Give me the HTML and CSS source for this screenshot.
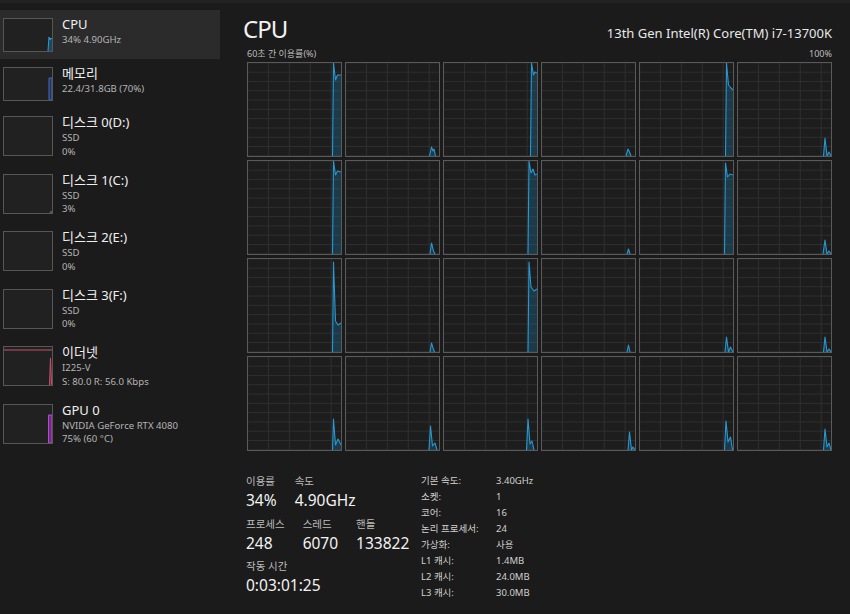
FILE: index.html
```html
<!DOCTYPE html>
<html lang="ko">
<head>
<meta charset="utf-8">
<title>작업 관리자 - CPU</title>
<link rel="stylesheet" href="styles.css">
</head>
<body>
<div class="topbar"></div>
<div class="app">
  <nav class="sidebar">
    <div class="item sel">
      <div class="thumb"><svg viewBox="0 0 48 32"><path class="a-cpu" d="M44 32 L45 18 L46 21 L47 19 L48 20 L48 32Z"/><polyline class="l-cpu" points="44,32 45,18 46,21 47,19 48,20"/></svg></div>
      <div class="info"><div class="name">CPU</div><div class="sub">34% 4.90GHz</div></div>
    </div>
    <div class="item">
      <div class="thumb"><svg viewBox="0 0 48 32"><path class="a-mem" d="M45 32 L45 10 L48 10 L48 32Z"/></svg></div>
      <div class="info"><div class="name">메모리</div><div class="sub">22.4/31.8GB (70%)</div></div>
    </div>
    <div class="item tall">
      <div class="thumb"></div>
      <div class="info"><div class="name">디스크 0(D:)</div><div class="sub">SSD</div><div class="sub">0%</div></div>
    </div>
    <div class="item tall">
      <div class="thumb"><svg viewBox="0 0 48 38"><polyline class="l-disk" points="46,38 47,36 48,38"/></svg></div>
      <div class="info"><div class="name">디스크 1(C:)</div><div class="sub">SSD</div><div class="sub">3%</div></div>
    </div>
    <div class="item tall">
      <div class="thumb"></div>
      <div class="info"><div class="name">디스크 2(E:)</div><div class="sub">SSD</div><div class="sub">0%</div></div>
    </div>
    <div class="item tall">
      <div class="thumb"></div>
      <div class="info"><div class="name">디스크 3(F:)</div><div class="sub">SSD</div><div class="sub">0%</div></div>
    </div>
    <div class="item tall">
      <div class="thumb"><svg viewBox="0 0 48 38"><polyline class="l-net" points="0,3 48,3"/><path class="a-net" d="M45.5 38 L46.5 11 L47.5 36 L48 38Z"/><polyline class="l-net" points="45.5,38 46.5,11 47.5,36 48,38"/></svg></div>
      <div class="info"><div class="name">이더넷</div><div class="sub">I225-V</div><div class="sub">S: 80.0 R: 56.0 Kbps</div></div>
    </div>
    <div class="item tall">
      <div class="thumb"><svg viewBox="0 0 48 38"><path class="a-gpu" d="M44.5 38 L44.5 10 L48 10 L48 38Z"/></svg></div>
      <div class="info"><div class="name">GPU 0</div><div class="sub">NVIDIA GeForce RTX 4080</div><div class="sub">75% (60 °C)</div></div>
    </div>
  </nav>

  <main class="main">
    <div class="header">
      <div class="title">CPU</div>
      <div class="model">13th Gen Intel(R) Core(TM) i7-13700K</div>
    </div>
    <div class="caption"><span>60초 간 이용률(%)</span><span>100%</span></div>
    <div class="grid">
      <!-- row 1 -->
      <div class="cell"><svg viewBox="0 0 93 93"><path class="area" d="M84.5 93 L85.5 0 L87.5 17 L89.5 12 L93 12 L93 93Z"/><polyline class="line" points="84.5,93 85.5,0 87.5,17 89.5,12 93,12"/></svg></div>
      <div class="cell"><svg viewBox="0 0 93 93"><path class="area" d="M83.5 93 L85.5 84 L87 88 L88 86 L89.5 93Z"/><polyline class="line" points="83.5,93 85.5,84 87,88 88,86 89.5,93"/></svg></div>
      <div class="cell"><svg viewBox="0 0 93 93"><path class="area" d="M86.5 93 L87.5 0 L89.5 12 L91 9 L93 10 L93 93Z"/><polyline class="line" points="86.5,93 87.5,0 89.5,12 91,9 93,10"/></svg></div>
      <div class="cell"><svg viewBox="0 0 93 93"><path class="area" d="M84 93 L86 86 L87.5 89 L89 93Z"/><polyline class="line" points="84,93 86,86 87.5,89 89,93"/></svg></div>
      <div class="cell"><svg viewBox="0 0 93 93"><path class="area" d="M85.5 93 L86.5 0 L88.5 22 L91 25 L93 27 L93 93Z"/><polyline class="line" points="85.5,93 86.5,0 88.5,22 91,25 93,27"/></svg></div>
      <div class="cell"><svg viewBox="0 0 93 93"><path class="area" d="M85.5 93 L87 75 L89 93 L91 89 L93 93Z"/><polyline class="line" points="85.5,93 87,75 89,93 91,89 93,93"/></svg></div>
      <!-- row 2 -->
      <div class="cell"><svg viewBox="0 0 93 93"><path class="area" d="M84.5 93 L85.5 0 L87.5 14 L89.5 10 L93 11 L93 93Z"/><polyline class="line" points="84.5,93 85.5,0 87.5,14 89.5,10 93,11"/></svg></div>
      <div class="cell"><svg viewBox="0 0 93 93"><path class="area" d="M84 93 L85.5 82 L87.5 90 L89 93Z"/><polyline class="line" points="84,93 85.5,82 87.5,90 89,93"/></svg></div>
      <div class="cell"><svg viewBox="0 0 93 93"><path class="area" d="M84 93 L85 0 L87 12 L89 8 L91 14 L93 13 L93 93Z"/><polyline class="line" points="84,93 85,0 87,12 89,8 91,14 93,13"/></svg></div>
      <div class="cell"><svg viewBox="0 0 93 93"><path class="area" d="M85 93 L86.5 88 L88 93Z"/><polyline class="line" points="85,93 86.5,88 88,93"/></svg></div>
      <div class="cell"><svg viewBox="0 0 93 93"><path class="area" d="M84.5 93 L85.5 2 L87.5 16 L90 13 L93 14 L93 93Z"/><polyline class="line" points="84.5,93 85.5,2 87.5,16 90,13 93,14"/></svg></div>
      <div class="cell"><svg viewBox="0 0 93 93"><path class="area" d="M85 93 L87 79 L89 93 L91 90 L93 93Z"/><polyline class="line" points="85,93 87,79 89,93 91,90 93,93"/></svg></div>
      <!-- row 3 -->
      <div class="cell"><svg viewBox="0 0 93 93"><path class="area" d="M84.5 93 L85.5 3 L87.5 62 L90 66 L93 64 L93 93Z"/><polyline class="line" points="84.5,93 85.5,3 87.5,62 90,66 93,64"/></svg></div>
      <div class="cell"><svg viewBox="0 0 93 93"><path class="area" d="M84 93 L85.5 84 L87 89 L88.5 93Z"/><polyline class="line" points="84,93 85.5,84 87,89 88.5,93"/></svg></div>
      <div class="cell"><svg viewBox="0 0 93 93"><path class="area" d="M84 93 L85 3 L87 28 L90 32 L93 30 L93 93Z"/><polyline class="line" points="84,93 85,3 87,28 90,32 93,30"/></svg></div>
      <div class="cell"><svg viewBox="0 0 93 93"><path class="area" d="M85 93 L86.5 86 L88 93Z"/><polyline class="line" points="85,93 86.5,86 88,93"/></svg></div>
      <div class="cell"><svg viewBox="0 0 93 93"><path class="area" d="M85 93 L86.5 78 L88.5 93 L90.5 88 L93 93Z"/><polyline class="line" points="85,93 86.5,78 88.5,93 90.5,88 93,93"/></svg></div>
      <div class="cell"><svg viewBox="0 0 93 93"><path class="area" d="M85.5 93 L87 78 L89 93 L91 90 L93 93Z"/><polyline class="line" points="85.5,93 87,78 89,93 91,90 93,93"/></svg></div>
      <!-- row 4 -->
      <div class="cell"><svg viewBox="0 0 93 93"><path class="area" d="M84.5 93 L85.5 62 L87.5 88 L90 82 L93 88 L93 93Z"/><polyline class="line" points="84.5,93 85.5,62 87.5,88 90,82 93,88"/></svg></div>
      <div class="cell"><svg viewBox="0 0 93 93"><path class="area" d="M83 93 L84.5 69 L86.5 89 L89 86 L91 93Z"/><polyline class="line" points="83,93 84.5,69 86.5,89 89,86 91,93"/></svg></div>
      <div class="cell"><svg viewBox="0 0 93 93"><path class="area" d="M82.5 93 L84 62 L86 87 L88 84 L90 93Z"/><polyline class="line" points="82.5,93 84,62 86,87 88,84 90,93"/></svg></div>
      <div class="cell"><svg viewBox="0 0 93 93"><path class="area" d="M86 93 L87.5 75 L89.5 93 L91 90 L93 93Z"/><polyline class="line" points="86,93 87.5,75 89.5,93 91,90 93,93"/></svg></div>
      <div class="cell"><svg viewBox="0 0 93 93"><path class="area" d="M84.5 93 L86 64 L88 85 L90.5 80 L92.5 93Z"/><polyline class="line" points="84.5,93 86,64 88,85 90.5,80 92.5,93"/></svg></div>
      <div class="cell"><svg viewBox="0 0 93 93"><path class="area" d="M85.5 93 L87 72 L89 90 L91 86 L93 93Z"/><polyline class="line" points="85.5,93 87,72 89,90 91,86 93,93"/></svg></div>
    </div>

    <div class="stats">
      <div class="dyn">
        <div class="row">
          <div class="stat"><div class="lbl">이용률</div><div class="val">34%</div></div>
          <div class="stat"><div class="lbl">속도</div><div class="val">4.90GHz</div></div>
        </div>
        <div class="row">
          <div class="stat"><div class="lbl">프로세스</div><div class="val">248</div></div>
          <div class="stat"><div class="lbl">스레드</div><div class="val">6070</div></div>
          <div class="stat"><div class="lbl">핸들</div><div class="val">133822</div></div>
        </div>
        <div class="row">
          <div class="stat"><div class="lbl">작동 시간</div><div class="val">0:03:01:25</div></div>
        </div>
      </div>
      <div class="specs">
        <span>기본 속도:</span><span>3.40GHz</span>
        <span>소켓:</span><span>1</span>
        <span>코어:</span><span>16</span>
        <span>논리 프로세서:</span><span>24</span>
        <span>가상화:</span><span>사용</span>
        <span>L1 캐시:</span><span>1.4MB</span>
        <span>L2 캐시:</span><span>24.0MB</span>
        <span>L3 캐시:</span><span>30.0MB</span>
      </div>
    </div>
  </main>
</div>
</body>
</html>
```

FILE: styles.css
```css
html, body {
  margin: 0;
  padding: 0;
}
body {
  width: 850px;
  height: 614px;
  overflow: hidden;
  background: #1b1b1b;
  color: #ececec;
  font-family: "Noto Sans", "Noto Sans CJK KR", sans-serif;
}
.topbar {
  height: 3px;
  background: #222222;
}
.app {
  display: flex;
  height: 611px;
}

/* sidebar */
.sidebar {
  width: 220px;
  flex: none;
  padding-top: 7px;
}
.item {
  display: flex;
  align-items: flex-start;
  gap: 9px;
  box-sizing: border-box;
  height: 49px;
  padding: 8px 0 0 3px;
}
.item.tall {
  height: 57.5px;
}
.item.sel {
  background: #2b2b2b;
}
.thumb {
  flex: none;
  box-sizing: border-box;
  width: 50px;
  height: 34px;
  border: 1px solid #565656;
  background: #212121;
}
.tall .thumb {
  height: 40px;
}
.thumb svg {
  display: block;
  width: 48px;
  height: 100%;
}
.info {
  margin-top: -2px;
  white-space: nowrap;
}
.name {
  font-size: 13px;
  line-height: 17px;
  color: #f0f0f0;
}
.sub {
  font-size: 9.6px;
  line-height: 13.5px;
  color: #b4b4b4;
}
.a-cpu { fill: rgba(30, 140, 200, 0.35); }
.l-cpu { fill: none; stroke: #2a9dd4; stroke-width: 1; }
.a-mem { fill: rgba(60, 100, 200, 0.3); stroke: #3f6dc8; stroke-width: 1; }
.l-disk { fill: none; stroke: #6a6a6a; stroke-width: 1; }
.a-net { fill: rgba(200, 80, 110, 0.3); }
.l-net { fill: none; stroke: #c8506e; stroke-width: 1; }
.a-gpu { fill: rgba(150, 50, 180, 0.65); stroke: #b04ad0; stroke-width: 1; }

/* main */
.main {
  flex: 1;
  padding: 0 18px 0 23px;
}
.header {
  display: flex;
  justify-content: space-between;
  align-items: baseline;
  padding-top: 10px;
}
.title {
  font-size: 24px;
  line-height: 31px;
  letter-spacing: -1px;
  color: #f2f2f2;
}
.model {
  font-size: 13px;
  color: #e8e8e8;
}
.caption {
  display: flex;
  justify-content: space-between;
  margin: 3px 0 2px 4px;
  font-size: 9px;
  line-height: 13px;
  color: #bdbdbd;
}
.grid {
  display: grid;
  grid-template-columns: repeat(6, 95px);
  grid-template-rows: repeat(4, 95px);
  gap: 3px;
  margin-left: 4px;
}
.cell {
  box-sizing: border-box;
  border: 1px solid #5a5a5a;
  background-color: #1d1d1d;
  background-image:
    linear-gradient(to right, #2e2e2e 1px, transparent 1px),
    linear-gradient(to bottom, #2e2e2e 1px, transparent 1px);
  background-size: 20.9px 100%, 100% 9.3px;
  background-position: 20px 0, 0 8.7px;
}
.cell svg {
  display: block;
  width: 93px;
  height: 93px;
  overflow: hidden;
}
.area {
  fill: rgba(28, 125, 180, 0.3);
}
.line {
  fill: none;
  stroke: #2898cf;
  stroke-width: 1.1;
  stroke-linejoin: round;
}

/* stats */
.stats {
  display: flex;
  margin-top: 22px;
}
.dyn {
  width: 178px;
  flex: none;
  box-sizing: border-box;
  padding: 1px 0 0 3px;
}
.row {
  display: flex;
  gap: 18px;
}
.row + .row {
  margin-top: 5.5px;
}
.lbl {
  font-size: 10.5px;
  line-height: 14px;
  color: #bcbcbc;
  white-space: nowrap;
}
.val {
  margin-top: 2px;
  font-size: 15.5px;
  line-height: 21px;
  color: #f2f2f2;
  white-space: nowrap;
}
.specs {
  display: grid;
  grid-template-columns: 75px auto;
  font-size: 9.5px;
  line-height: 16px;
  color: #d0d0d0;
  white-space: nowrap;
}
```
